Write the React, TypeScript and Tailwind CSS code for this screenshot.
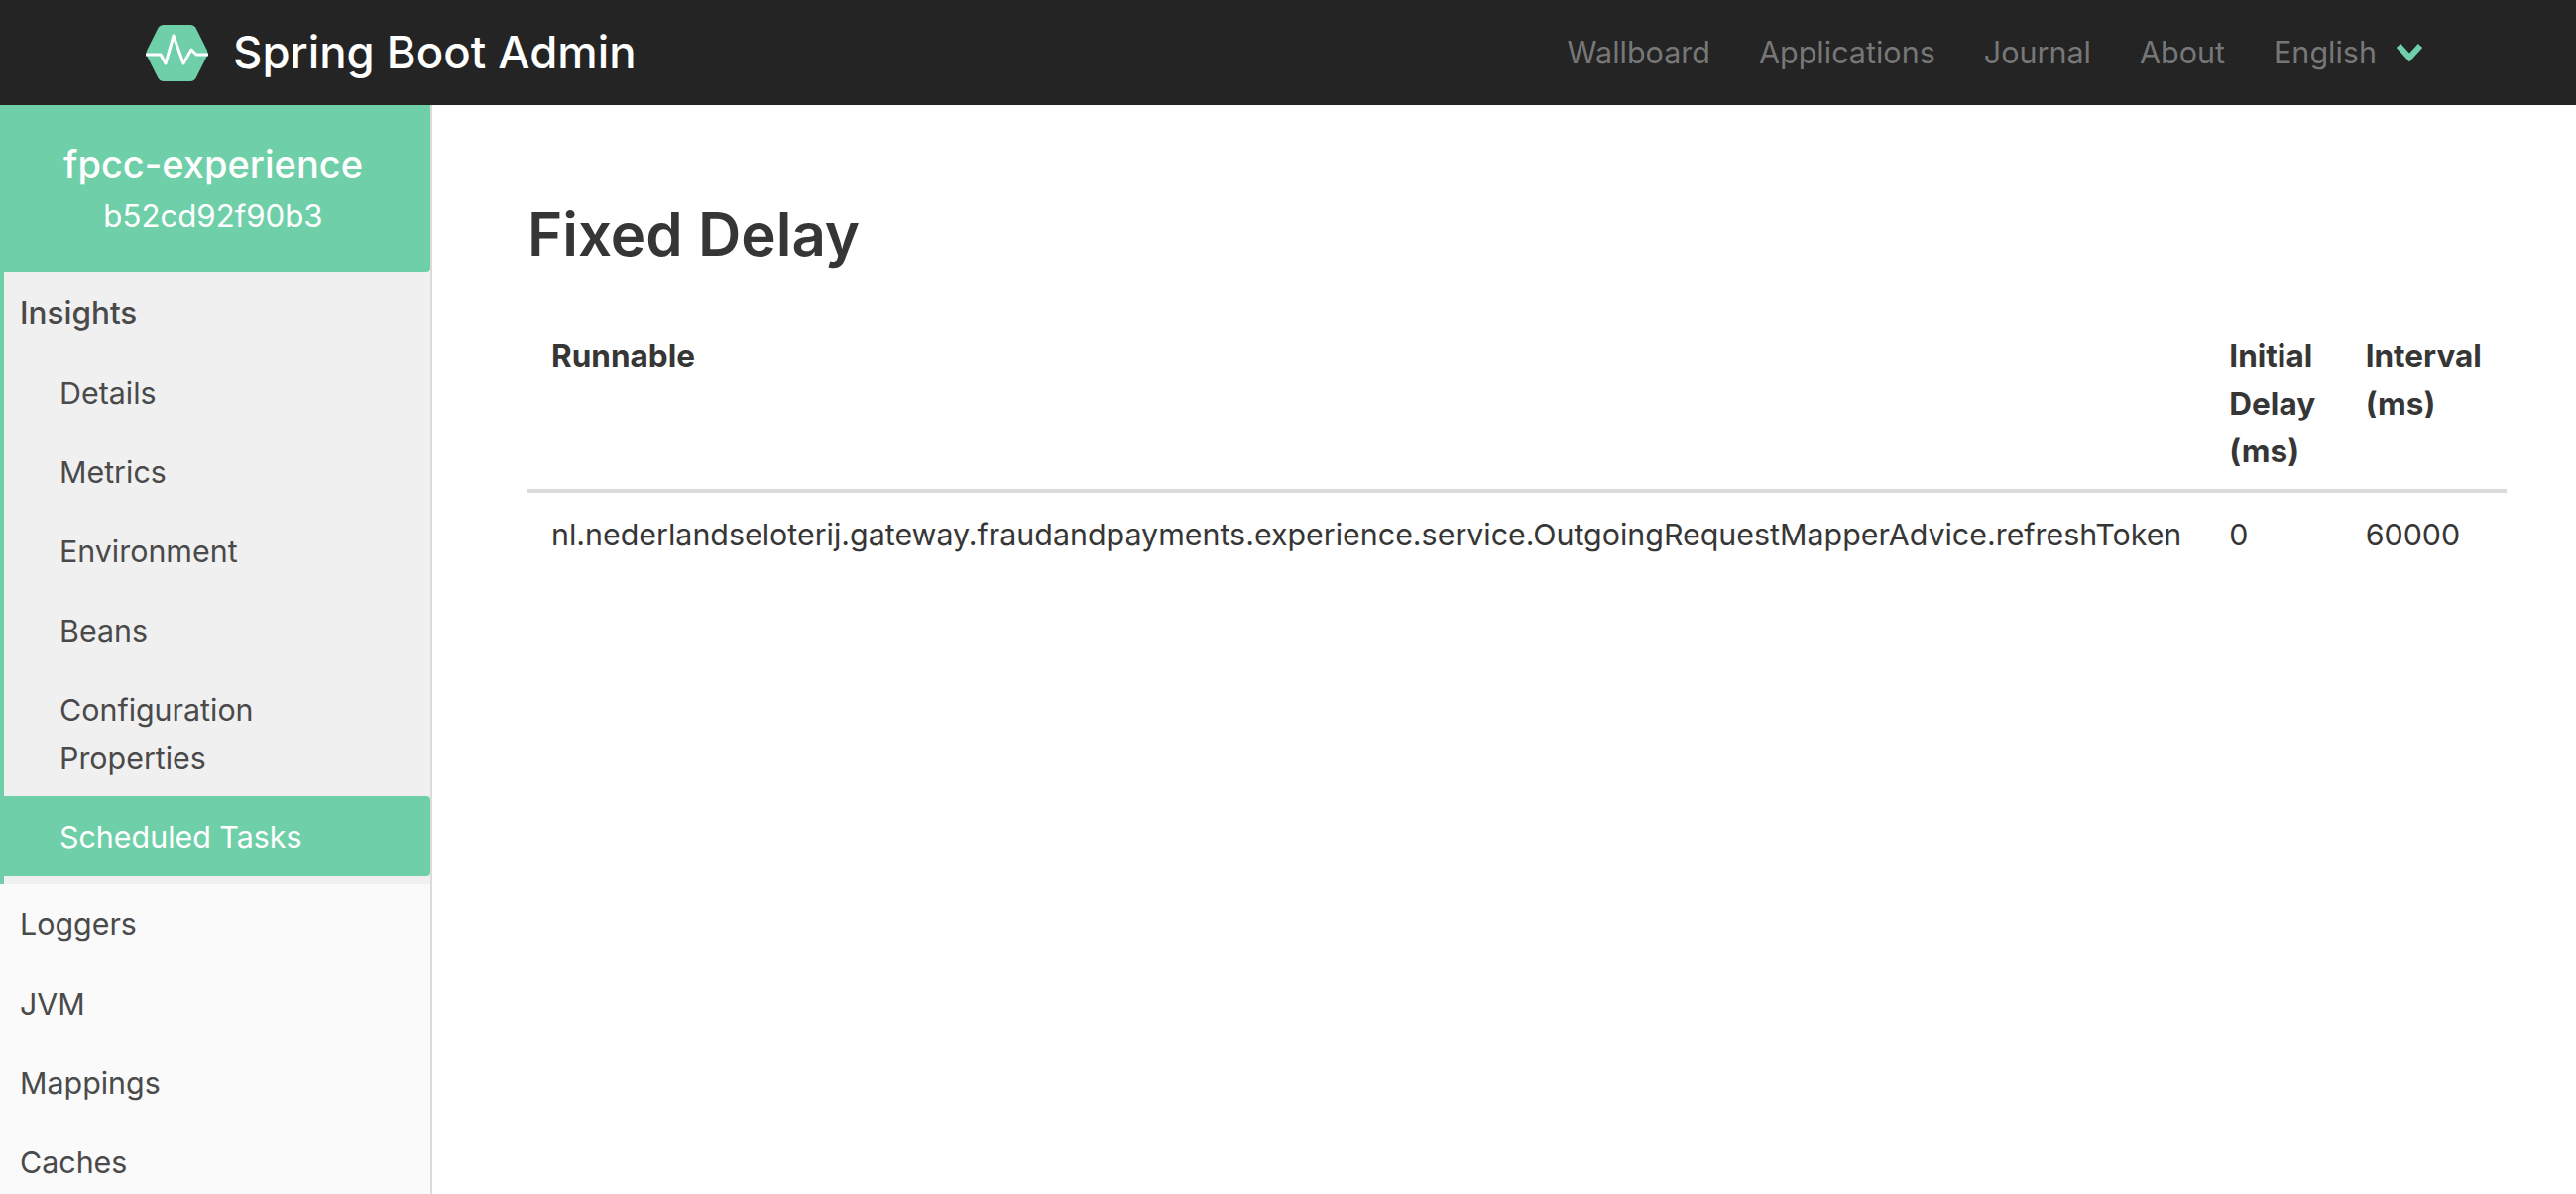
const insights = ['Details', 'Metrics', 'Environment', 'Beans', 'Configuration Properties'];
const others = ['Loggers', 'JVM', 'Mappings', 'Caches'];
const navLinks = ['Wallboard', 'Applications', 'Journal', 'About'];

function Logo() {
  return (
    <svg width="63" height="57" viewBox="0 0 63 57" className="shrink-0">
      <path d="M18 0 H45 Q49 0 51 4 L62 26 Q63 28.500 62 31 L51 53 Q49 57 45 57 H18 Q14 57 12 53 L1 31 Q0 28.500 1 26 L12 4 Q14 0 18 0 Z" fill="#6fcfa9" />
      <path d="M0 30 H15 L20 39 L28 11 L38 39 L46 25 L51 30 H63" fill="none" stroke="#fff" strokeWidth="3" strokeLinejoin="round" strokeLinecap="round" />
    </svg>
  );
}

function Navbar() {
  return (
    <header className="flex h-[106px] items-center justify-between bg-[#242424] pl-[147px] pr-[154px]">
      <div className="flex items-center gap-[25px]">
        <Logo />
        <span className="text-[45.500px] font-medium text-white">Spring Boot Admin</span>
      </div>
      <nav className="flex items-center gap-[49px] text-[30.500px] text-[#777777]">
        {navLinks.map((link) => (
          <a key={link}>{link}</a>
        ))}
        <span className="flex items-center gap-[19px]">
          English
          <svg width="28" height="20" viewBox="0 0 28 20">
            <path d="M3 3 L14 15 L25 3" fill="none" stroke="#6fcfa9" strokeWidth="6" />
          </svg>
        </span>
      </nav>
    </header>
  );
}

function Sidebar() {
  return (
    <aside className="w-[436px] shrink-0 border-r-2 border-[#dbdbdb] bg-[#fafafa] text-[30.400px] leading-[48px] text-[#4a4a4a]">
      <div className="flex h-[168px] flex-col items-center justify-center rounded-br-[4px] bg-[#6fcfa9] pr-1 pt-[3px] text-white">
        <h2 className="text-[38px] font-medium leading-[48px]">fpcc-experience</h2>
        <span className="mt-[5px] text-[31.200px] leading-[48px]">b52cd92f90b3</span>
      </div>
      <div className="border-l-4 border-[#6fcfa9] bg-[#f0f0f0] pb-2">
        <div className="px-4 pb-[15px] pt-[18px] text-[31.500px] font-medium">Insights</div>
        {insights.map((item) => (
          <div key={item} className="pb-[15px] pl-[56px] pr-8 pt-[17px]">
            {item}
          </div>
        ))}
        <div className="-ml-1 rounded-r-[4px] bg-[#6fcfa9] pb-[15px] pl-[60px] pr-4 pt-[17px] text-white">Scheduled Tasks</div>
      </div>
      {others.map((item) => (
        <div key={item} className="px-5 pb-[15px] pt-[17px]">
          {item}
        </div>
      ))}
    </aside>
  );
}

export default function App() {
  return (
    <div className="flex h-screen flex-col overflow-hidden bg-white font-['Inter',sans-serif] text-[#363636]">
      <Navbar />
      <div className="flex min-h-0 flex-1">
        <Sidebar />
        <main className="min-w-0 flex-1 pl-[96px] pr-[70px] pt-[85px]">
          <h1 className="mb-[42px] text-[60px] font-semibold leading-[90px]">Fixed Delay</h1>
          <table className="w-full text-left text-[30.400px] leading-[48px]">
            <thead>
              <tr className="border-b-4 border-[#dbdbdb] align-top text-[31.500px]">
                <th className="px-6 pb-[14px] pt-3 font-bold">Runnable</th>
                <th className="px-6 pb-[14px] pt-3 font-bold">Initial Delay (ms)</th>
                <th className="px-6 pb-[14px] pt-3 font-bold">Interval (ms)</th>
              </tr>
            </thead>
            <tbody>
              <tr>
                <td className="px-6 py-[18px]">nl.nederlandseloterij.gateway.fraudandpayments.experience.service.OutgoingRequestMapperAdvice.refreshToken</td>
                <td className="px-6 py-[18px]">0</td>
                <td className="px-6 py-[18px]">60000</td>
              </tr>
            </tbody>
          </table>
        </main>
      </div>
    </div>
  );
}
